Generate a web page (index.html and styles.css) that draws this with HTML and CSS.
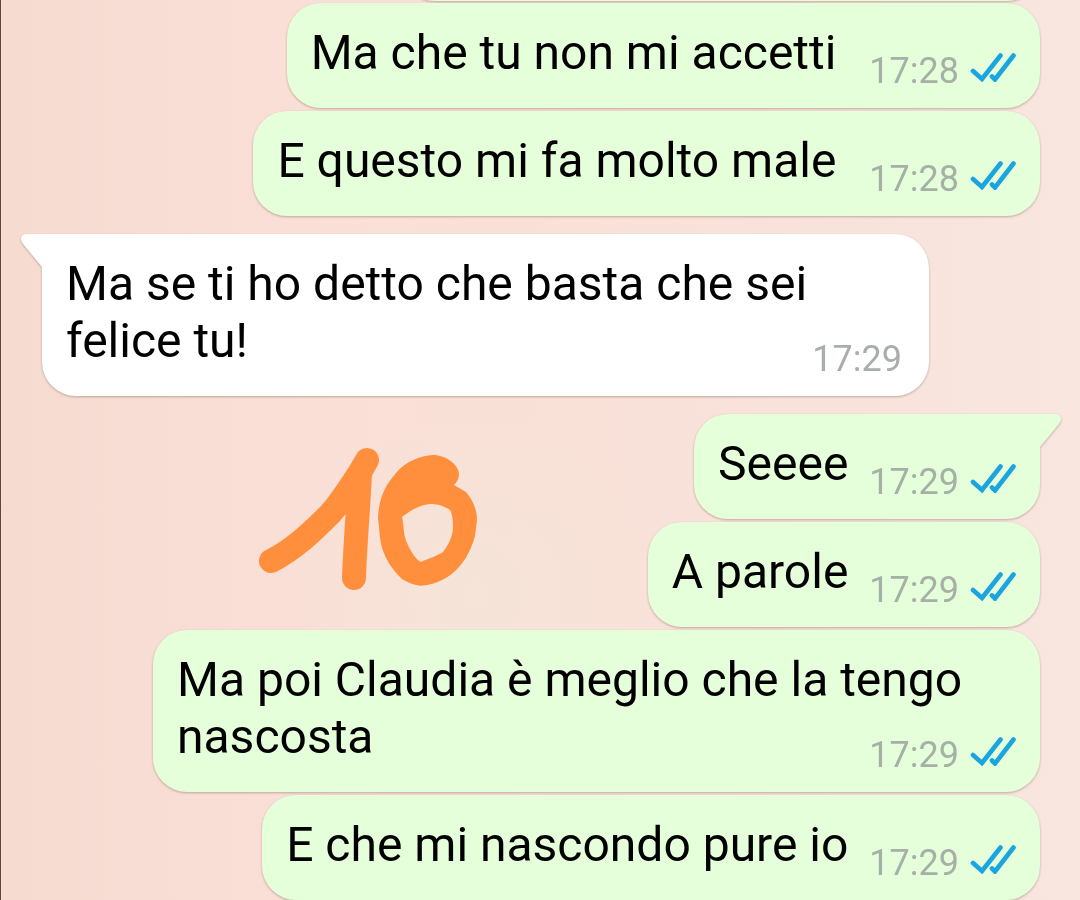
FILE: index.html
```html
<!DOCTYPE html>
<html lang="it">
<head>
    <meta charset="UTF-8">
    <meta name="viewport" content="width=device-width, initial-scale=1.0">
    <title>Chat</title>
    <link rel="stylesheet" href="styles.css">
</head>
<body>
    <!-- Shared double check icon -->
    <svg class="defs" aria-hidden="true">
        <symbol id="ticks" viewBox="0 0 46 30">
            <path d="M3 19L12 27L30.5 3.5M22 24.5L25 27.5L43.5 3.5" fill="none" stroke="#1ba5e0" stroke-width="4.6" stroke-linecap="round"/>
        </symbol>
    </svg>

    <main class="chat">
        <div class="previous">
            <div class="bubble out"></div>
        </div>

        <div class="bubble out">
            <p class="text">Ma che tu non mi accetti&nbsp;</p>
            <div class="meta"><time>17:28</time><svg class="ticks"><use href="#ticks"/></svg></div>
        </div>
        <div class="bubble out">
            <p class="text">E questo mi fa molto male&nbsp;</p>
            <div class="meta"><time>17:28</time><svg class="ticks"><use href="#ticks"/></svg></div>
        </div>

        <div class="bubble in long first">
            <svg class="tail" viewBox="0 0 22 34"><path d="M22 0H6C0 0 -2 5 2 10L21 33H22Z"/></svg>
            <p class="text">Ma se ti ho detto che basta che sei felice tu!</p>
            <div class="meta"><time>17:29</time></div>
        </div>

        <div class="bubble out first">
            <svg class="tail" viewBox="0 0 22 34"><path d="M0 0H16C22 0 24 5 20 10L1 33H0Z"/></svg>
            <p class="text">Seeee</p>
            <div class="meta"><time>17:29</time><svg class="ticks"><use href="#ticks"/></svg></div>
        </div>
        <div class="bubble out">
            <p class="text">A parole</p>
            <div class="meta"><time>17:29</time><svg class="ticks"><use href="#ticks"/></svg></div>
        </div>
        <div class="bubble out long">
            <p class="text">Ma poi Claudia è meglio che la tengo nascosta</p>
            <div class="meta"><time>17:29</time><svg class="ticks"><use href="#ticks"/></svg></div>
        </div>
        <div class="bubble out">
            <p class="text">E che mi nascondo pure io</p>
            <div class="meta"><time>17:29</time><svg class="ticks"><use href="#ticks"/></svg></div>
        </div>

        <!-- Marker drawing over the chat -->
        <svg class="drawing" viewBox="0 0 250 180" role="img" aria-label="10">
            <path class="stroke" d="M21 131C45 119 65 99 80 84C92 71 102 54 112 39L117 30L110 42C109 70 105 115 104 148"/>
            <path class="shape" d="M183 25C196 25 209 35 209 44C209 49 207 52 204 55L216 62C223 70 227 80 227 90L225 106C220 124 212 135 204 142C194 151 180 155.7 170 155.7C163 155 157 152 152 149C138 136 131 120 130 107L128 88C129 66 136 55 146 43C156 31 170 26 183 25ZM152 87C161 80 170 75 180 74C188 74 194 76 200 80Q203 85 203 97C203 106 198 116 193 122C187 126 177 129 171 132C166 130 160 120 157 113C153 105 154 95 152 87Z"/>
        </svg>
    </main>
</body>
</html>
```

FILE: styles.css
```css
* {
    box-sizing: border-box;
}
body {
    margin: 0;
    height: 100vh;
    overflow: hidden;
    border-left: 1px solid #5c4842;
    background: radial-gradient(ellipse at 44% 66%, rgba(245, 229, 217, 0.8), rgba(245, 229, 217, 0) 22%), linear-gradient(to right, #f6dbd1, #fae0d7 35%, #f8e2d9 70%, #f8e6df);
    font-family: Roboto, "Liberation Sans", sans-serif;
    color: #000;
}
.defs {
    display: none;
}
.chat {
    position: relative;
    display: flex;
    flex-direction: column;
    align-items: flex-start;
    gap: 3px;
    padding: 0 40px 0 41px;
}
.bubble {
    position: relative;
    display: flex;
    align-items: flex-end;
    gap: 21px;
    max-width: calc(100% - 111px);
    padding: 21px 24px 16px;
    border-radius: 34px;
    filter: drop-shadow(0 1px 1px rgba(80, 40, 20, 0.32));
}
.in {
    padding-right: 27px;
    background: #fff;
    fill: #fff;
}
.out {
    align-self: flex-end;
    background: #e5ffdb;
    fill: #e5ffdb;
}
.first {
    margin-top: 15px;
}
.in.first {
    border-top-left-radius: 0;
}
.out.first {
    border-top-right-radius: 0;
}
.tail {
    position: absolute;
    top: 0;
    width: 22px;
    height: 34px;
}
.in .tail {
    right: calc(100% - 1px);
}
.out .tail {
    left: calc(100% - 1px);
}
.text {
    margin: 0;
    padding-bottom: 11px;
    font-size: 48px;
    line-height: 57px;
}
.meta {
    display: flex;
    align-items: center;
    gap: 11px;
    font-size: 36px;
    line-height: 42px;
    color: #a6b0a6;
}
.in .meta {
    color: #a9adaf;
}
.ticks {
    width: 46px;
    height: 30px;
    margin-bottom: 8px;
}

/* Long messages: the time sits in the corner, under the first line */
.long {
    display: grid;
}
.long .text,
.long .meta {
    grid-area: 1 / 1;
}
.long .meta {
    place-self: end;
}

/* Bottom edge of the message scrolled off the top */
.previous {
    align-self: stretch;
    display: flex;
    flex-direction: column;
    justify-content: flex-end;
    height: 1px;
    margin-bottom: -1px;
}
.previous .bubble {
    flex: none;
    width: 64%;
    height: 105px;
}
.drawing {
    position: absolute;
    top: 430px;
    left: 249px;
    width: 250px;
    height: 180px;
}
.stroke {
    fill: none;
    stroke: #ff8f3c;
    stroke-width: 24;
    stroke-linecap: round;
    stroke-linejoin: round;
}
.shape {
    fill: #ff8f3c;
    fill-rule: evenodd;
}
```
